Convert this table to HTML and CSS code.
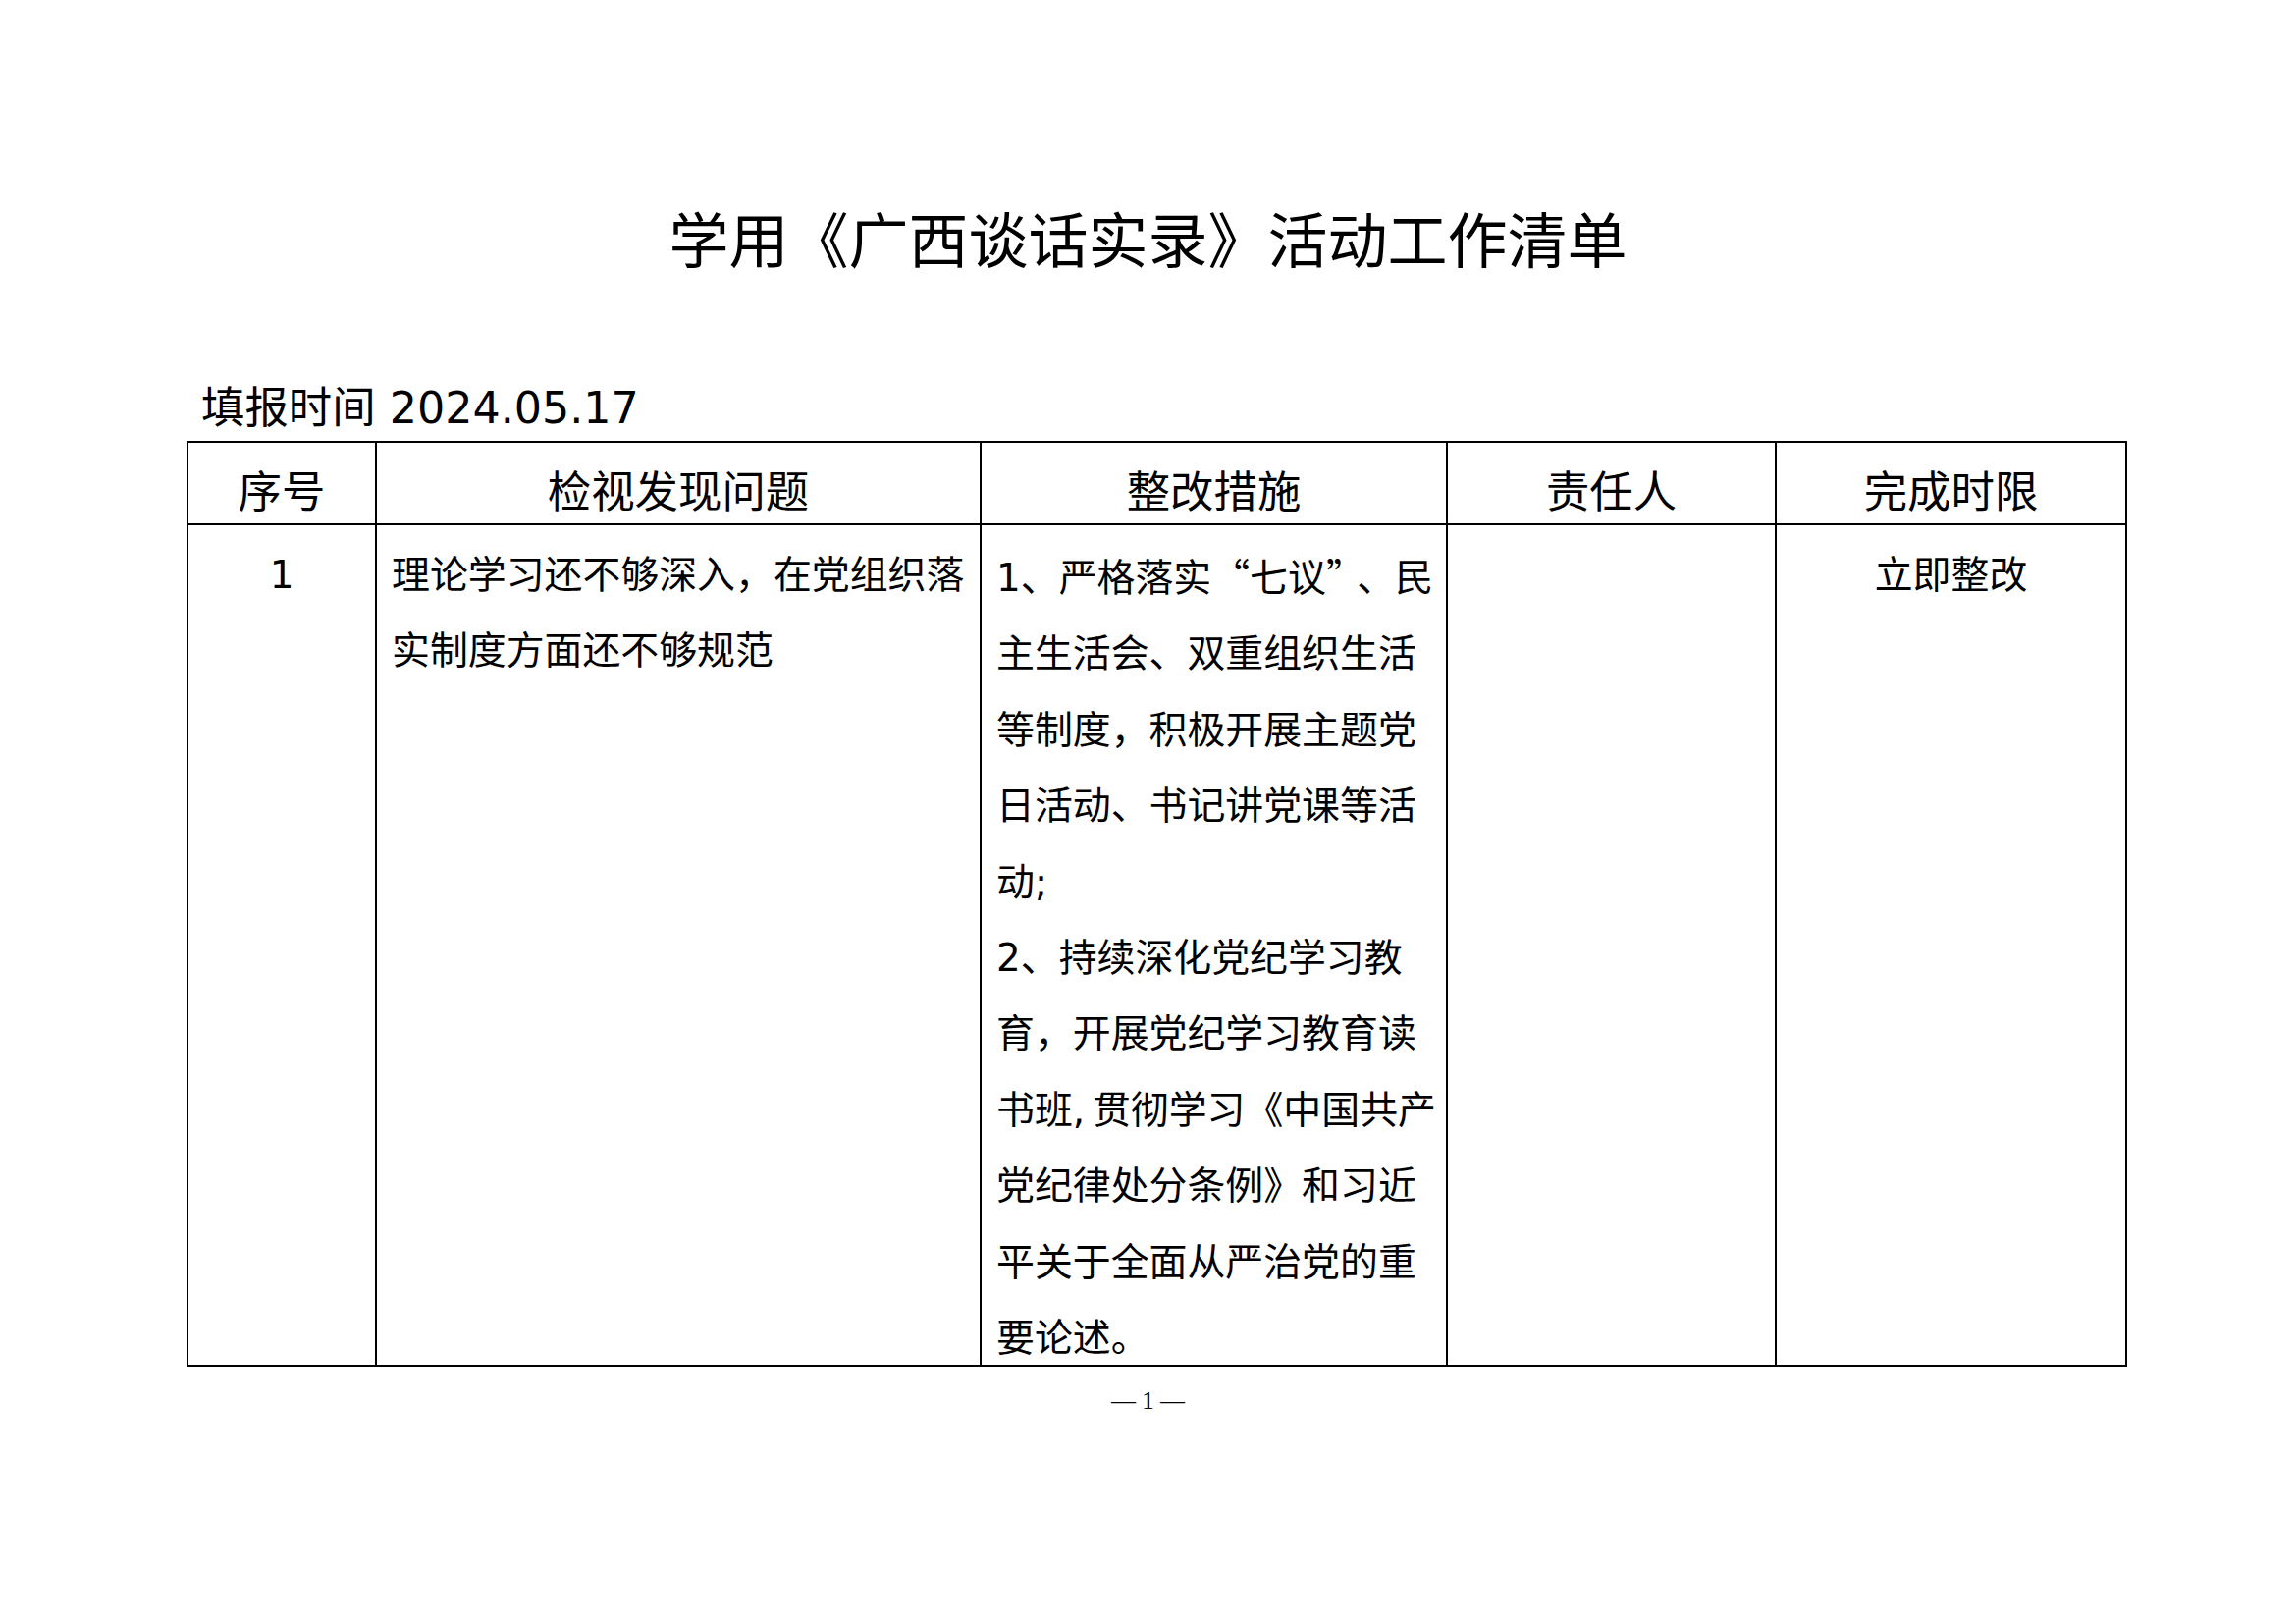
FILE: index.html
```html
<!DOCTYPE html>
<html lang="zh-CN">
<head>
<meta charset="utf-8">
<title>学用《广西谈话实录》活动工作清单</title>
<link rel="stylesheet" href="styles.css">
</head>
<body>
<div class="page">
  <h1 class="title">学用《广西谈话实录》活动工作清单</h1>
  <div class="date">填报时间 2024.05.17</div>
  <table class="list">
    <colgroup>
      <col class="c1"><col class="c2"><col class="c3"><col class="c4"><col class="c5">
    </colgroup>
    <thead>
      <tr>
        <th>序号</th>
        <th>检视发现问题</th>
        <th>整改措施</th>
        <th>责任人</th>
        <th>完成时限</th>
      </tr>
    </thead>
    <tbody>
      <tr>
        <td class="center"><div class="cell">1</div></td>
        <td><div class="cell">理论学习还不够深入，在党组织落<br>实制度方面还不够规范</div></td>
        <td><div class="cell">1、严格落实<span class="q">“</span>七议<span class="q qc">”</span>、民<br>主生活会、双重组织生活<br>等制度，积极开展主题党<br>日活动、书记讲党课等活<br>动;<br>2、持续深化党纪学习教<br>育，开展党纪学习教育读<br>书班,&#8201;贯彻学习《中国共产<br>党纪律处分条例》和习近<br>平关于全面从严治党的重<br>要论述。</div></td>
        <td><div class="cell"></div></td>
        <td class="center"><div class="cell">立即整改</div></td>
      </tr>
    </tbody>
  </table>
  <div class="pageno">— 1 —</div>
</div>
</body>
</html>
```

FILE: styles.css
```css
html, body {
  margin: 0;
  padding: 0;
  background: #ffffff;
}

body {
  font-family: "DejaVu Sans", "Noto Sans CJK SC", sans-serif;
  color: #000000;
}

.page {
  width: 2339px;
  height: 1654px;
  box-sizing: border-box;
  padding-top: 207px;
}

.title {
  margin: 0;
  text-align: center;
  font-size: 61px;
  font-weight: normal;
  line-height: 80px;
}

.date {
  margin: 99px 0 0 205px;
  font-size: 44.4px;
  line-height: 60px;
}

.list {
  margin: 3px 0 0 190px;
  border-collapse: collapse;
  table-layout: fixed;
  width: 1977px;
}

.c1 { width: 192px; }
.c2 { width: 616px; }
.c3 { width: 475px; }
.c4 { width: 335px; }
.c5 { width: 357px; }

.list th,
.list td {
  border: 2px solid #000000;
}

.list th {
  font-size: 44.4px;
  font-weight: normal;
  line-height: 62px;
  padding: 20px 0 0 0;
  text-align: center;
  vertical-align: top;
}

.list td {
  font-size: 38.9px;
  line-height: 77.4px;
  padding: 12px 4px 0 15px;
  vertical-align: top;
  text-align: left;
}

.list td.center {
  text-align: center;
  padding-left: 0;
  padding-right: 0;
}

.cell {
  height: 843px;
  white-space: nowrap;
}

.q {
  font-family: "Noto Sans CJK SC", sans-serif;
  font-feature-settings: "fwid";
}

.qc {
  margin-right: 12px;
}

.pageno {
  margin-top: 20px;
  text-align: center;
  font-family: "Liberation Serif", serif;
  font-size: 25px;
  line-height: 30px;
}
```
